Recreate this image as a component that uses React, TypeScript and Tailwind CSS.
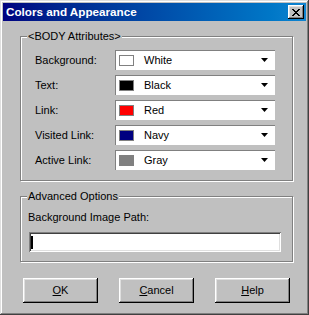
import React from 'react'

const rows = [
  { label: 'Background:', color: '#ffffff', name: 'White' },
  { label: 'Text:', color: '#000000', name: 'Black' },
  { label: 'Link:', color: '#ff0000', name: 'Red' },
  { label: 'Visited Link:', color: '#000080', name: 'Navy' },
  { label: 'Active Link:', color: '#808080', name: 'Gray' },
]

const raised =
  'shadow-[inset_-1px_-1px_0_#000000,inset_1px_1px_0_#ffffff,inset_-2px_-2px_0_#808080,inset_2px_2px_0_#dfdfdf]'

function ColorCombo({ color, name }: { color: string; name: string }) {
  return (
    <div className="flex h-[20px] w-[160px] items-center bg-white shadow-[inset_1px_1px_0_#808080]">
      <div className="ml-[4px] h-[11px] w-[15px] border border-[#808080]" style={{ backgroundColor: color }} />
      <span className="ml-[10px]">{name}</span>
      <svg className="ml-auto mr-[7px]" width="7" height="4" viewBox="0 0 7 4">
        <polygon points="0,0 7,0 3.5,4" fill="#000" />
      </svg>
    </div>
  )
}

function GroupBox({ title, className, children }: { title: string; className: string; children: React.ReactNode }) {
  return (
    <div
      className={`relative ml-[17px] w-[273px] border border-[#808080] shadow-[1px_1px_0_#ffffff,inset_1px_1px_0_#ffffff] ${className}`}
    >
      <span className="absolute left-[6px] top-[-7px] bg-[#c0c0c0] px-[1px] leading-[13px]">{title}</span>
      {children}
    </div>
  )
}

function DialogButton({ mnemonic, rest }: { mnemonic: string; rest: string }) {
  return (
    <button className={`flex h-[25px] w-[75px] items-center justify-center bg-[#c0c0c0] ${raised}`}>
      <span>
        <u>{mnemonic}</u>
        {rest}
      </span>
    </button>
  )
}

export default function App() {
  return (
    <div className="h-[315px] w-[309px] bg-[#c0c0c0] p-[3px] font-['Liberation_Sans',Arial,sans-serif] text-[11px] text-black shadow-[inset_-1px_-1px_0_#404040,inset_1px_1px_0_#dfdfdf,inset_-2px_-2px_0_#808080,inset_2px_2px_0_#ffffff]">
      {/* title bar */}
      <div className="flex h-[18px] items-center justify-between bg-linear-to-r from-[#000080] to-[#1084d0] pl-[3px] pr-[2px]">
        <span className="text-[11.7px] font-bold text-white">Colors and Appearance</span>
        <button className={`flex h-[14px] w-[16px] items-center justify-center bg-[#c0c0c0] ${raised}`}>
          <svg width="8" height="7" viewBox="0 0 8 7" shapeRendering="crispEdges">
            <path d="M0 0h2v1h1v1h2v-1h1v-1h2v1h-1v1h-1v1h-1v1h1v1h1v1h1v1h-2v-1h-1v-1h-2v1h-1v1h-2v-1h1v-1h1v-1h1v-1h-1v-1h-1v-1h-1z" fill="#000" />
          </svg>
        </button>
      </div>

      <GroupBox title="<BODY Attributes>" className="mt-[15px] h-[145px] pl-[14px] pt-[13px]">
        <div className="flex flex-col gap-[5px]">
          {rows.map((r) => (
            <div key={r.label} className="flex h-[20px] items-center">
              <span className="w-[80px]">{r.label}</span>
              <ColorCombo color={r.color} name={r.name} />
            </div>
          ))}
        </div>
      </GroupBox>

      <GroupBox title="Advanced Options" className="mt-[15px] h-[66px] pl-[7px] pt-[14px]">
        <p className="leading-[13px]">Background Image Path:</p>
        <div className="ml-[1px] mt-[8px] flex h-[20px] w-[252px] items-center bg-white pl-[2px] shadow-[inset_1px_1px_0_#808080,inset_-1px_-1px_0_#ffffff,inset_2px_2px_0_#404040,inset_-2px_-2px_0_#dfdfdf]">
          <div className="h-[13px] w-[2px] bg-black" />
        </div>
      </GroupBox>

      <div className="ml-[20px] mt-[16px] flex gap-[21px]">
        <DialogButton mnemonic="O" rest="K" />
        <DialogButton mnemonic="C" rest="ancel" />
        <DialogButton mnemonic="H" rest="elp" />
      </div>
    </div>
  )
}
